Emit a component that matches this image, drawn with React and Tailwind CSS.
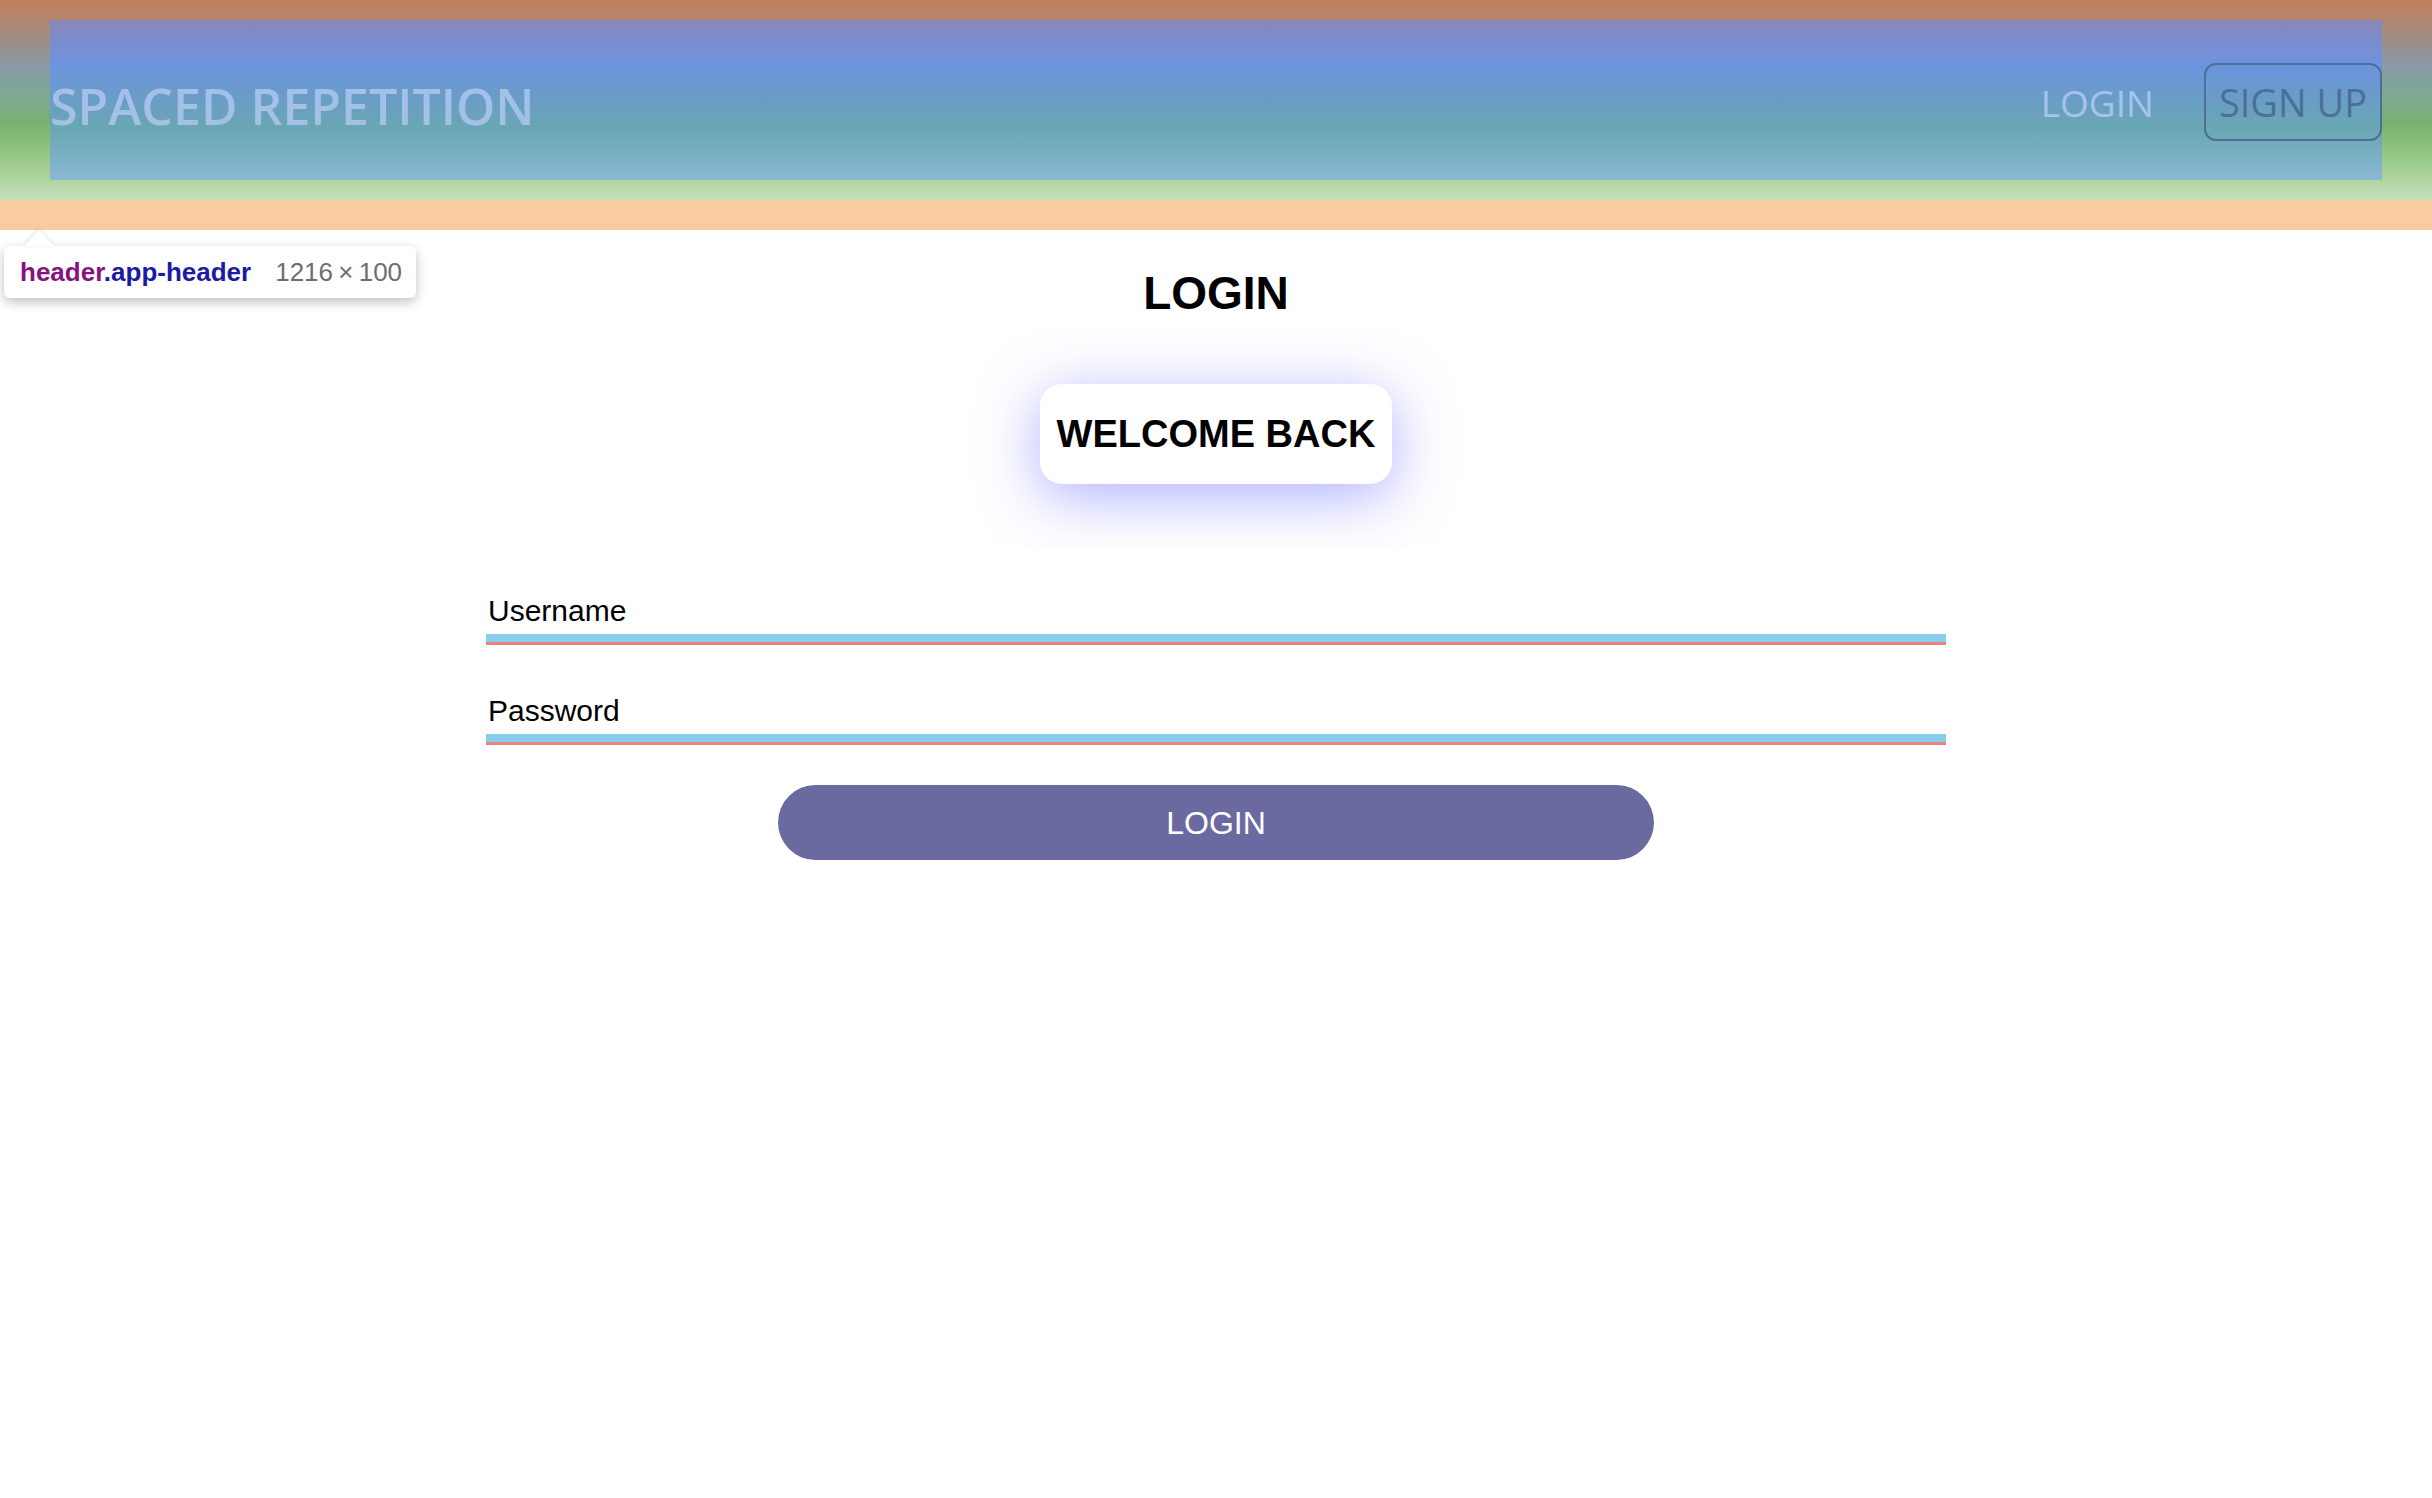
import React from 'react';

const AppHeader = () => (
  <header className="bg-[linear-gradient(to_bottom,#c07f5a_0%,#b3876f_10%,#9a8f8c_22%,#8a9aa4_32%,#80a59a_45%,#79b270_62%,#8fc47f_75%,#b0d4a0_90%,#c6e0b8_100%)] px-[50px] py-[20px]">
    <div className="h-[160px] flex items-center justify-between bg-[linear-gradient(to_bottom,#8a86b9_0%,#7b8dcf_14%,#6c93de_28%,#6a9cc8_48%,#69a6b3_66%,#78b0c2_84%,#8bb9d3_100%)] font-['Open_Sans','Noto_Sans',sans-serif]">
      <h1 className="mt-[12px] text-[50px] font-semibold text-[#a3c1e6] leading-none whitespace-nowrap">SPACED REPETITION</h1>
      <nav className="flex items-center gap-[50px] mt-[4px]">
        <a className="text-[37px] text-[#a6c4ea] leading-none">LOGIN</a>
        <a className="h-[78px] flex items-center px-[13px] border-2 border-[#4c6f96] rounded-[12px] text-[38px] text-[#4b6f97] leading-none whitespace-nowrap">
          SIGN UP
        </a>
      </nav>
    </div>
  </header>
);

const InspectorTip = () => (
  <div className="absolute left-[4px] top-[230px]">
    <div className="ml-[20px] w-0 h-0 border-l-[15px] border-r-[15px] border-b-[16px] border-l-transparent border-r-transparent border-b-white drop-shadow-[0_-1px_2px_rgba(0,0,0,0.12)]" />
    <div className="w-[412px] h-[52px] bg-white rounded-[6px] shadow-[0_4px_12px_rgba(0,0,0,0.25)] flex items-center px-[16px] gap-[24px] text-[26px] whitespace-nowrap font-['Liberation_Sans',Arial,sans-serif]">
      <span className="font-bold shrink-0">
        <span className="text-[#881280]">header</span>
        <span className="text-[#1a1aa6]">.app-header</span>
      </span>
      <span className="text-[#6e6e6e] shrink-0">1216{'\u2009'}×{'\u2009'}100</span>
    </div>
  </div>
);

const Field = ({ label }) => (
  <div className="flex flex-col">
    <label className="text-[30px] text-black leading-[34px] pl-[2px]">{label}</label>
    <div className="mt-[6px] h-[11px] bg-[#87ceeb] border-b-[3px] border-[#f08080]" />
  </div>
);

export default function App() {
  return (
    <div className="relative min-h-screen bg-white font-['Liberation_Sans',Arial,sans-serif] text-black">
      <AppHeader />
      <div className="h-[30px] bg-[#f8cc9f]" />

      <main className="flex flex-col items-center">
        <h2 className="mt-[37px] text-[46px] font-bold leading-[53px]">LOGIN</h2>

        <div className="overflow-hidden px-[94px] py-[64px]">
          <div className="w-[352px] h-[100px] flex items-center justify-center bg-white rounded-[22px] shadow-[0_12px_60px_rgba(105,112,255,0.55)] text-[38px] font-bold">
            WELCOME BACK
          </div>
        </div>

        <form className="w-[1460px] flex flex-col mt-[46px]">
          <Field label="Username" />
          <div className="h-[49px]" />
          <Field label="Password" />
          <div className="flex justify-center mt-[40px]">
            <button
              type="button"
              className="w-[876px] h-[75px] rounded-full bg-[#6a6aa0] text-white text-[32px]"
            >
              LOGIN
            </button>
          </div>
        </form>
      </main>

      <InspectorTip />
    </div>
  );
}
